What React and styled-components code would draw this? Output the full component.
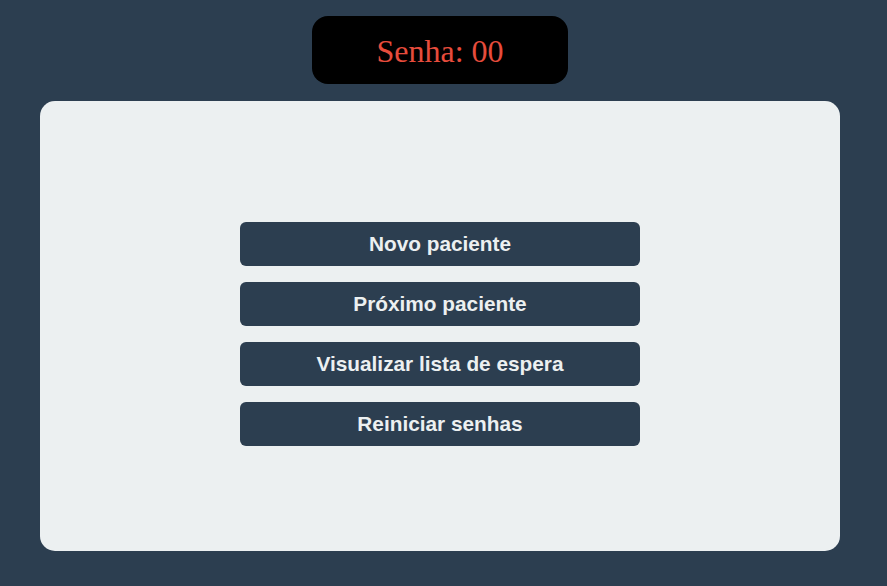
import React, {useState} from 'react';
import styled, {createGlobalStyle} from 'styled-components';

const GlobalStyle = createGlobalStyle`
  html, body {
    margin: 0;
    padding: 0;
    background: #2c3e50;
  }
`

const Page = styled.div`
  display: flex;
  flex-direction: column;
  align-items: center;
  width: 880px;
  padding-top: 16px;
  min-height: 586px;
  box-sizing: border-box;
`

const Display = styled.div`
  display: flex;
  justify-content: center;
  align-items: center;
  width: 256px;
  height: 68px;
  margin-bottom: 17px;
  background: #000;
  border-radius: 16px;
  color: #e74c3c;
  font-family: "Liberation Serif", "Times New Roman", serif;
  font-size: 32px;
  padding-top: 2px;
  box-sizing: border-box;
`

const Panel = styled.div`
  display: flex;
  flex-direction: column;
  justify-content: center;
  align-items: center;
  gap: 16px;
  width: 800px;
  height: 450px;
  padding-top: 16px;
  box-sizing: border-box;
  background: #ecf0f1;
  border-radius: 15px;
`

const Button = styled.button`
  width: 400px;
  height: 44px;
  border: none;
  border-radius: 6px;
  background: #2c3e50;
  color: #ecf0f1;
  font-family: "Liberation Sans", Arial, sans-serif;
  font-weight: bold;
  font-size: 20.8px;
  cursor: pointer;
`

const App = () => {
  const [ senha, setSenha ] = useState(0);

  const pad = n => String(n).padStart(2, '0');

  return (
    <React.Fragment>
      <GlobalStyle />
      <Page>
        <Display>Senha: { pad(senha) }</Display>
        <Panel>
          <Button onClick={ () => setSenha(senha + 1) }>Novo paciente</Button>
          <Button>Próximo paciente</Button>
          <Button>Visualizar lista de espera</Button>
          <Button onClick={ () => setSenha(0) }>Reiniciar senhas</Button>
        </Panel>
      </Page>
    </React.Fragment>
  );
};

export default App;
